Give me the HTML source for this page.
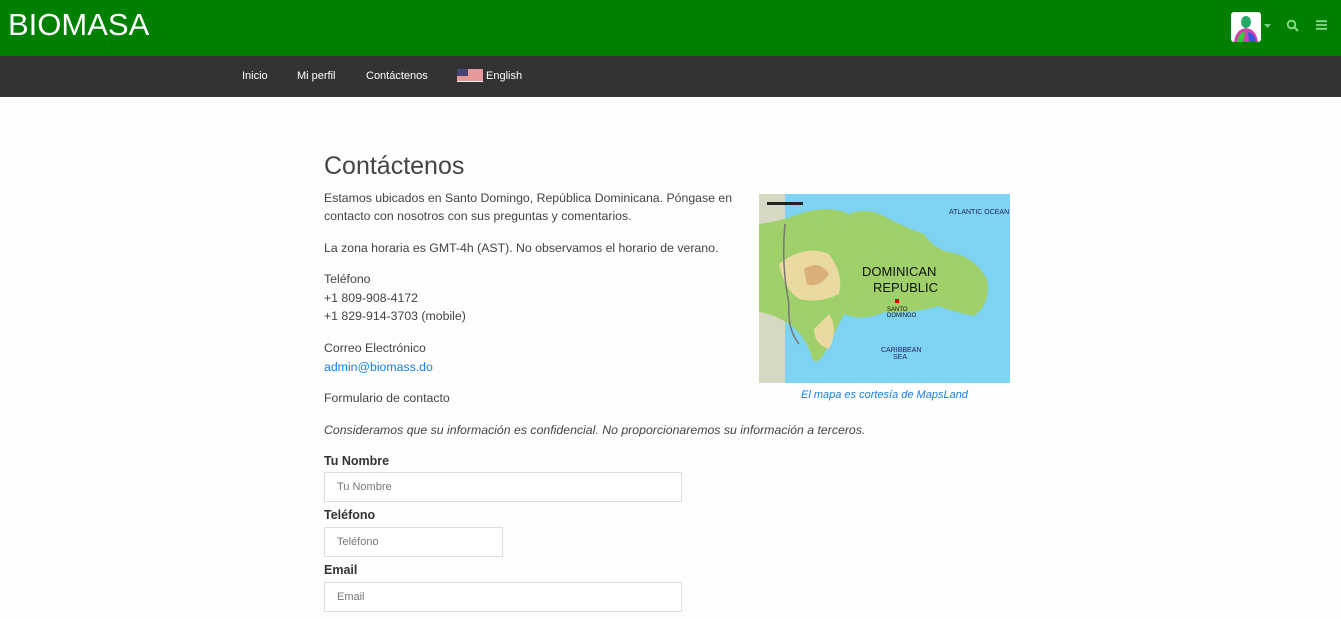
<!DOCTYPE html>
<html><head><meta charset="utf-8"><style>
*{margin:0;padding:0;box-sizing:border-box}
body{width:1341px;height:619px;overflow:hidden;background:#fdfdfd;font-family:"Liberation Sans",Arial,sans-serif;color:#444;font-size:12.3px;position:relative}
.a{position:absolute;white-space:nowrap;line-height:18px}
#top{position:absolute;left:0;top:0;width:1341px;height:56px;background:#008000}
#nav{position:absolute;left:0;top:56px;width:1341px;height:41px;background:#333}
.n{position:absolute;top:69px;color:#fff;font-size:11px;line-height:14px}
label{position:absolute;font-weight:bold;font-size:12.5px;color:#333}
.in{position:absolute;border:1px solid #ddd;background:#fff;height:30px;font-size:11px;color:#777;padding-left:12px;line-height:28px}
</style></head><body>
<div id="top"></div>
<div class="a" style="left:8px;top:5px;font-size:31px;line-height:40px;color:#fff">BIOMASA</div>
<svg style="position:absolute;left:1231px;top:12px" width="30" height="30" viewBox="0 0 30 30">
<rect width="30" height="30" rx="3" fill="#fff"/>
<ellipse cx="15" cy="10" rx="5" ry="6" fill="#2a6"/>
<path d="M3 30 Q5 17 15 16 Q25 17 27 30Z" fill="#c4a"/>
<path d="M6 30 Q8 20 14 20 L12 30Z" fill="#3c3"/><path d="M17 20 Q24 22 25 30 L18 30Z" fill="#35d"/>
</svg>
<svg style="position:absolute;left:1264px;top:24px" width="7" height="4"><path d="M0 0H7L3.5 4Z" fill="#7c7"/></svg>
<svg style="position:absolute;left:1286px;top:19px" width="13" height="13" viewBox="0 0 13 13"><circle cx="5.5" cy="5.5" r="3.8" fill="none" stroke="#8d8" stroke-width="1.8"/><path d="M8.3 8.3L12 12" stroke="#8d8" stroke-width="2"/></svg>
<svg style="position:absolute;left:1316px;top:20px" width="11" height="10"><path d="M0 1.2H11M0 5H11M0 8.8H11" stroke="#8d8" stroke-width="1.8"/></svg>
<div id="nav"></div>
<div class="n" style="left:242px">Inicio</div>
<div class="n" style="left:297px">Mi perfil</div>
<div class="n" style="left:366px">Contáctenos</div>
<svg style="position:absolute;left:457px;top:69px" width="26" height="13" viewBox="0 0 26 13"><rect width="26" height="13" fill="#fff"/><path d="M0 1H26M0 3H26M0 5H26M0 7H26M0 9H26M0 11H26" stroke="#c33" stroke-width="1"/><rect width="11" height="7" fill="#447"/></svg>
<div class="n" style="left:486px">English</div>

<div class="a" style="left:324px;top:151px;font-size:25px;line-height:30px">Contáctenos</div>
<div class="a" style="left:324px;top:189px">Estamos ubicados en Santo Domingo, República Dominicana. Póngase en</div>
<div class="a" style="left:324px;top:207px">contacto con nosotros con sus preguntas y comentarios.</div>
<div class="a" style="left:324px;top:239px">La zona horaria es GMT-4h (AST). No observamos el horario de verano.</div>
<div class="a" style="left:324px;top:270px">Teléfono</div>
<div class="a" style="left:324px;top:289px">+1 809-908-4172</div>
<div class="a" style="left:324px;top:307px">+1 829-914-3703 (mobile)</div>
<div class="a" style="left:324px;top:339px">Correo Electrónico</div>
<div class="a" style="left:324px;top:358px;color:#1a7fe0">admin@biomass.do</div>
<div class="a" style="left:324px;top:389px">Formulario de contacto</div>
<div class="a" style="left:324px;top:421px;font-style:italic">Consideramos que su información es confidencial. No proporcionaremos su información a terceros.</div>

<svg style="position:absolute;left:759px;top:194px" width="251" height="189" viewBox="0 0 251 189">
<rect width="251" height="189" fill="#7fd3f2"/>
<path d="M0 0H26V189H0Z" fill="#d6d8c4"/>
<path d="M0 30 Q20 28 40 20 Q70 10 90 20 Q110 12 130 25 Q150 35 165 40 Q175 55 190 58 Q215 62 228 85 Q232 110 215 122 Q195 118 180 112 Q150 120 125 118 Q105 128 85 120 Q75 140 65 160 Q55 175 52 160 Q45 140 30 130 Q15 120 0 118Z" fill="#9fd06a"/>
<path d="M20 70 Q45 50 70 60 Q85 80 80 100 Q60 110 40 105 Q25 95 20 70Z" fill="#ead9a0"/>
<path d="M45 75 Q60 65 70 80 Q60 95 48 90Z" fill="#d9b078"/>
<path d="M70 120 Q80 135 70 155 Q55 150 55 135Z" fill="#ead9a0"/>
<path d="M26 30 Q22 70 30 110 Q28 135 40 150" stroke="#777" stroke-width="1.5" fill="none"/>
<text x="103" y="82" font-size="13" font-family="Liberation Sans" fill="#111">DOMINICAN</text>
<text x="114" y="98" font-size="13" font-family="Liberation Sans" fill="#111">REPUBLIC</text>
<text x="190" y="20" font-size="7" font-family="Liberation Sans" fill="#226">ATLANTIC OCEAN</text>
<text x="122" y="158" font-size="7" font-family="Liberation Sans" fill="#226">CARIBBEAN</text>
<text x="134" y="165" font-size="7" font-family="Liberation Sans" fill="#226">SEA</text>
<rect x="136" y="105" width="4" height="4" fill="#d00"/>
<text x="128" y="117" font-size="6" font-family="Liberation Sans" fill="#111">SANTO</text>
<text x="128" y="123" font-size="6" font-family="Liberation Sans" fill="#111">DOMINGO</text>
<rect x="8" y="8" width="36" height="3" fill="#222"/>
</svg>
<div class="a" style="left:801px;top:386px;font-size:11px;font-style:italic;color:#1a7fe0">El mapa es cortesía de MapsLand</div>

<label style="left:324px;top:454px">Tu Nombre</label>
<div class="in" style="left:324px;top:472px;width:358px">Tu Nombre</div>
<label style="left:324px;top:508px">Teléfono</label>
<div class="in" style="left:324px;top:527px;width:179px">Teléfono</div>
<label style="left:324px;top:563px">Email</label>
<div class="in" style="left:324px;top:582px;width:358px">Email</div>
</body></html>
